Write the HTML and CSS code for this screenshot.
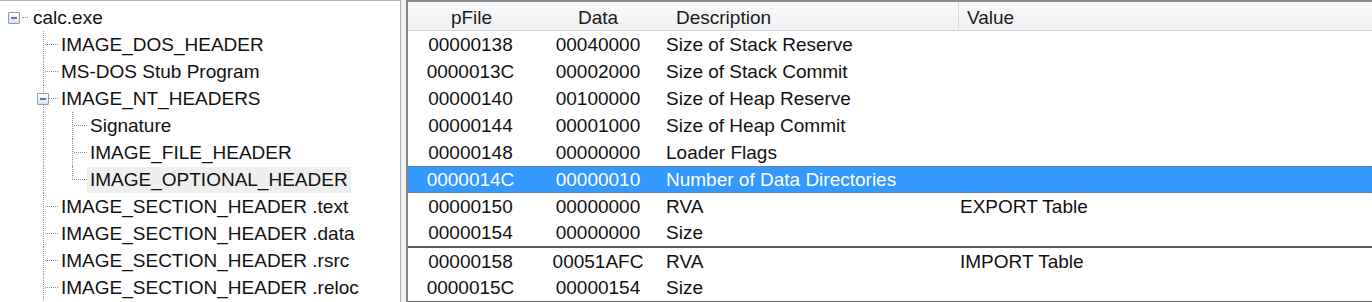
FILE: index.html
```html
<!DOCTYPE html>
<html lang="en">
  <head>
    <meta charset="UTF-8" />
    <title>calc.exe - PE View</title>
    <link rel="stylesheet" href="styles.css">
  </head>
  <body>
    <!-- 左邊：PE 結構樹 -->
    <div class="tree-pane">
      <div class="node">
        <span class="joint root"><span class="expander"></span></span>
        <span class="label">calc.exe</span>
      </div>
      <div class="node">
        <span class="indent"></span><span class="joint"></span>
        <span class="label">IMAGE_DOS_HEADER</span>
      </div>
      <div class="node">
        <span class="indent"></span><span class="joint"></span>
        <span class="label">MS-DOS Stub Program</span>
      </div>
      <div class="node">
        <span class="indent"></span><span class="joint"><span class="expander"></span></span>
        <span class="label">IMAGE_NT_HEADERS</span>
      </div>
      <div class="node">
        <span class="indent"></span><span class="guide"></span><span class="joint"></span>
        <span class="label">Signature</span>
      </div>
      <div class="node">
        <span class="indent"></span><span class="guide"></span><span class="joint"></span>
        <span class="label">IMAGE_FILE_HEADER</span>
      </div>
      <div class="node">
        <span class="indent"></span><span class="guide"></span><span class="joint last"></span>
        <span class="label selected">IMAGE_OPTIONAL_HEADER</span>
      </div>
      <div class="node">
        <span class="indent"></span><span class="joint"></span>
        <span class="label">IMAGE_SECTION_HEADER .text</span>
      </div>
      <div class="node">
        <span class="indent"></span><span class="joint"></span>
        <span class="label">IMAGE_SECTION_HEADER .data</span>
      </div>
      <div class="node">
        <span class="indent"></span><span class="joint"></span>
        <span class="label">IMAGE_SECTION_HEADER .rsrc</span>
      </div>
      <div class="node">
        <span class="indent"></span><span class="joint"></span>
        <span class="label">IMAGE_SECTION_HEADER .reloc</span>
      </div>
    </div>

    <div class="splitter"></div>

    <!-- 右邊：欄位列表 -->
    <div class="list-pane">
      <div class="list-head">
        <span class="col-center">pFile</span>
        <span class="col-center">Data</span>
        <span class="col-desc">Description</span>
        <span class="col-value">Value</span>
      </div>
      <div class="list-row">
        <span class="col-center">00000138</span><span class="col-center">00040000</span>
        <span class="col-desc">Size of Stack Reserve</span><span class="col-value"></span>
      </div>
      <div class="list-row">
        <span class="col-center">0000013C</span><span class="col-center">00002000</span>
        <span class="col-desc">Size of Stack Commit</span><span class="col-value"></span>
      </div>
      <div class="list-row">
        <span class="col-center">00000140</span><span class="col-center">00100000</span>
        <span class="col-desc">Size of Heap Reserve</span><span class="col-value"></span>
      </div>
      <div class="list-row">
        <span class="col-center">00000144</span><span class="col-center">00001000</span>
        <span class="col-desc">Size of Heap Commit</span><span class="col-value"></span>
      </div>
      <div class="list-row">
        <span class="col-center">00000148</span><span class="col-center">00000000</span>
        <span class="col-desc">Loader Flags</span><span class="col-value"></span>
      </div>
      <div class="list-row active">
        <span class="col-center">0000014C</span><span class="col-center">00000010</span>
        <span class="col-desc">Number of Data Directories</span><span class="col-value"></span>
      </div>
      <div class="list-row">
        <span class="col-center">00000150</span><span class="col-center">00000000</span>
        <span class="col-desc">RVA</span><span class="col-value">EXPORT Table</span>
      </div>
      <div class="list-row group-end">
        <span class="col-center">00000154</span><span class="col-center">00000000</span>
        <span class="col-desc">Size</span><span class="col-value"></span>
      </div>
      <div class="list-row">
        <span class="col-center">00000158</span><span class="col-center">00051AFC</span>
        <span class="col-desc">RVA</span><span class="col-value">IMPORT Table</span>
      </div>
      <div class="list-row group-end">
        <span class="col-center">0000015C</span><span class="col-center">00000154</span>
        <span class="col-desc">Size</span><span class="col-value"></span>
      </div>
    </div>
  </body>
</html>
```

FILE: styles.css
```css
body {
  margin: 0;
  height: 302px;
  overflow: hidden;
  display: flex;
  background-color: #f0f0f0;
  font-family: "Liberation Sans", Arial, sans-serif;
  font-size: 19px;
  color: #111;
}

/* 樹狀區 */
.tree-pane {
  width: 400px;
  background-color: #fff;
  border-top: 1px solid #a9b1ba;
  border-right: 1px solid #a9b1ba;
  padding-top: 3px;
  overflow: hidden;
}

.node {
  display: flex;
  height: 27px;
  align-items: stretch;
  white-space: nowrap;
}

.indent,
.guide,
.joint {
  position: relative;
  flex: 0 0 29px;
}

/* 往下延伸的虛線 */
.guide::before,
.joint::before {
  content: "";
  position: absolute;
  left: 14px;
  top: 0;
  bottom: 0;
  border-left: 1px dotted #8e8e8e;
}

.joint.last::before {
  bottom: 13px;
}

/* 橫向的虛線 */
.joint::after {
  content: "";
  position: absolute;
  left: 16px;
  right: 0;
  top: 13px;
  border-top: 1px dotted #8e8e8e;
}

.joint.root::before {
  display: none;
}

.joint.root::after {
  left: 22px;
  right: 1px;
}

.expander {
  position: absolute;
  left: 8px;
  top: 8px;
  width: 10px;
  height: 10px;
  border: 1px solid #919aa5;
  border-radius: 1px;
  background: linear-gradient(#ffffff, #dde2e8);
  z-index: 1;
}

.expander::after {
  content: "";
  position: absolute;
  left: 2px;
  top: 4px;
  width: 6px;
  height: 2px;
  background-color: #5a77b0;
}

.label {
  padding: 0 3px;
  line-height: 26px;
  margin-top: 1px;
}

.joint.root + .label {
  padding-left: 4px;
}

.selected {
  background-color: #efefef;
}

.splitter {
  width: 5px;
}

/* 列表區 */
.list-pane {
  flex: 1;
  background-color: #fff;
  border-left: 2px solid #858585;
  border-top: 2px solid #8a8a8a;
  overflow: hidden;
}

.list-head,
.list-row {
  display: grid;
  grid-template-columns: 125px 130px 296px 1fr;
  white-space: nowrap;
}

.list-head {
  height: 28px;
  box-sizing: content-box;
  padding-top: 0;
  line-height: 32px;
  overflow: hidden;
  background: linear-gradient(#f7f8f9, #f0f1f3);
  border-bottom: 1px solid #d5d5d5;
  color: #1a1a1a;
}

.list-row {
  height: 27px;
  line-height: 27px;
  box-sizing: border-box;
}

.col-center {
  text-align: center;
}

.col-desc {
  padding-left: 3px;
}

.col-value {
  padding-left: 1px;
}

.list-head .col-desc {
  padding-left: 13px;
  border-right: 1px solid #dadada;
}

.list-head .col-value {
  padding-left: 8px;
}

.list-head .col-center:first-child {
  padding-left: 2px;
}

.list-row.active {
  background-color: #3399ff;
  color: #fff;
  border-top: 1px dotted #9a6f45;
  border-bottom: 1px dotted #9a6f45;
  line-height: 25px;
}

.list-row.group-end {
  height: 28px;
  border-bottom: 2px solid #5c5c5c;
  line-height: 26px;
}
```
